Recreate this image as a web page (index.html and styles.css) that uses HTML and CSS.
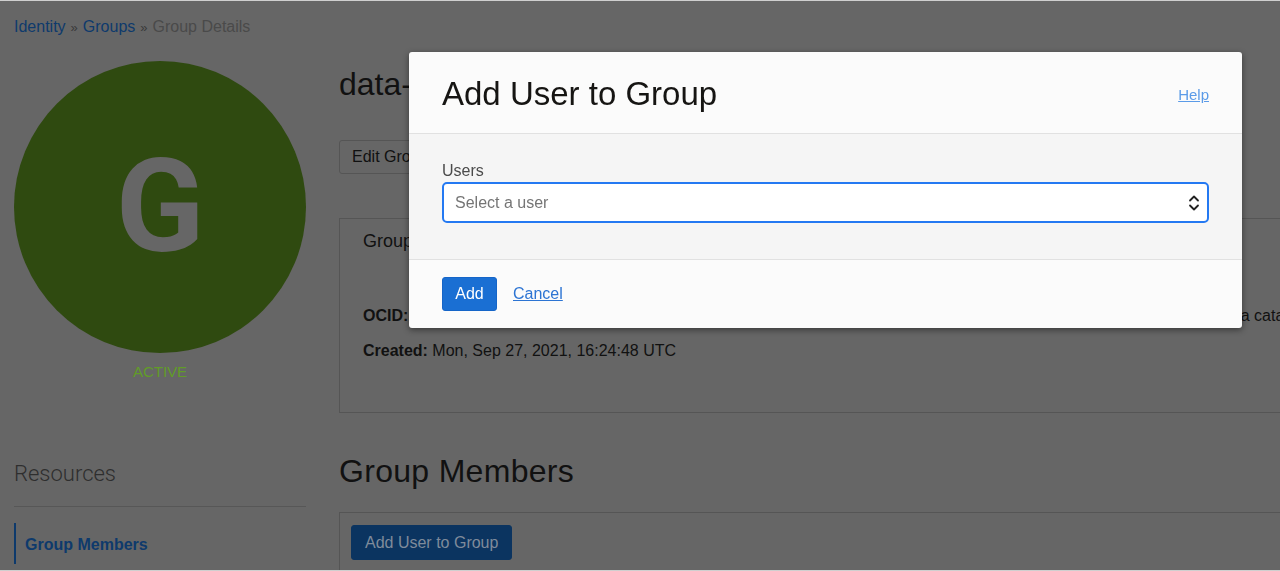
FILE: index.html
```html
<!DOCTYPE html>
<html lang="en">
<head>
<meta charset="utf-8">
<title>Group Details</title>
<link rel="stylesheet" href="styles.css">
</head>
<body>
<div class="page">
  <nav class="breadcrumb">
    <a href="#">Identity</a><span class="sep">»</span><a href="#">Groups</a><span class="sep">»</span><span class="current">Group Details</span>
  </nav>
  <div class="layout">
    <aside class="side">
      <div class="avatar"><span>G</span></div>
      <div class="status">ACTIVE</div>
      <h3 class="res-title">Resources</h3>
      <ul class="res-nav">
        <li class="active"><a href="#">Group Members</a></li>
      </ul>
    </aside>
    <main class="main">
      <h1 class="page-title">data-catalog-users</h1>
      <div class="actions">
        <button class="btn">Edit Group</button>
      </div>
      <section class="info-box">
        <h2 class="info-title">Group Information</h2>
        <div class="info-grid">
          <div class="col">
            <p class="row"><b>OCID:</b> ...xk7a <a href="#">Show</a> <a href="#">Copy</a></p>
            <p class="row"><b>Created:</b> Mon, Sep 27, 2021, 16:24:48 UTC</p>
          </div>
          <div class="col col2">
            <p class="row"><b>Description:</b> Users of the data catalog</p>
          </div>
        </div>
      </section>
      <h1 class="section-title">Group Members</h1>
      <section class="members-box">
        <button class="btn btn-primary-dim">Add User to Group</button>
      </section>
    </main>
  </div>
</div>

<div class="modal" role="dialog">
  <header class="modal-head">
    <h2 class="modal-title">Add User to Group</h2>
    <a href="#" class="help">Help</a>
  </header>
  <div class="modal-body">
    <label class="field-label">Users</label>
    <div class="select">
      <span class="placeholder">Select a user</span>
      <svg class="chev" width="14" height="24" viewBox="0 0 14 24" aria-hidden="true">
        <path d="M3 9.5 L7 5.5 L11 9.5" fill="none" stroke="#222" stroke-width="1.8" stroke-linecap="round" stroke-linejoin="round"/>
        <path d="M3 14.5 L7 18.5 L11 14.5" fill="none" stroke="#222" stroke-width="1.8" stroke-linecap="round" stroke-linejoin="round"/>
      </svg>
    </div>
  </div>
  <footer class="modal-foot">
    <button class="btn-add">Add</button>
    <a href="#" class="cancel">Cancel</a>
  </footer>
</div>
<div class="frame"></div>
</body>
</html>
```

FILE: styles.css
```css
html, body {
  margin: 0;
  padding: 0;
  height: 100%;
  overflow: hidden;
}
body {
  background: #666666;
  font-family: "Liberation Sans", Arial, sans-serif;
  color: #111;
}
.page {
  padding: 17px 0 0 14px;
  width: 1400px;
}
.breadcrumb {
  font-size: 16px;
  line-height: 20px;
  height: 20px;
}
.breadcrumb a {
  color: #0e3a6c;
  text-decoration: none;
}
.breadcrumb .sep {
  color: #3a3a3a;
  font-size: 13px;
  margin: 0 5px;
}
.breadcrumb .current {
  color: #4a4a4a;
}
.layout {
  display: flex;
  align-items: flex-start;
  gap: 33px;
  margin-top: 24px;
}
.side {
  width: 292px;
  flex: none;
}
.avatar {
  width: 292px;
  height: 292px;
  border-radius: 50%;
  background: #2f4a10;
  display: flex;
  align-items: center;
  justify-content: center;
}
.avatar span {
  color: #666666;
  font-family: Roboto, "Liberation Sans", sans-serif;
  font-weight: bold;
  font-size: 130px;
  line-height: 1;
}
.status {
  text-align: center;
  color: #619c28;
  font-size: 15px;
  line-height: 20px;
  margin-top: 9px;
}
.res-title {
  margin: 78px 0 0;
  font-family: Roboto, "Liberation Sans", sans-serif;
  font-weight: 300;
  font-size: 22px;
  line-height: 28px;
  color: #2e2e2e;
  padding-bottom: 18px;
  border-bottom: 1px solid #575757;
}
.res-nav {
  list-style: none;
  margin: 16px 0 0;
  padding: 0;
}
.res-nav li {
  border-left: 2px solid #0e3a6c;
  height: 41px;
  display: flex;
  align-items: center;
  padding-left: 9px;
  padding-top: 2px;
  box-sizing: border-box;
}
.res-nav a {
  color: #0e3a6c;
  font-weight: bold;
  font-size: 16px;
  text-decoration: none;
}
.main {
  flex: 1;
}
.page-title,
.section-title {
  margin: 0;
  font-weight: normal;
  font-size: 32px;
  line-height: 40px;
  color: #111;
}
.page-title {
  margin-top: 3px;
}
.section-title {
  letter-spacing: 0.3px;
}
.actions {
  margin-top: 36px;
}
.btn {
  font-family: inherit;
  font-size: 16px;
  height: 34px;
  padding: 0 12px;
  background: #666;
  color: #111;
  border: 1px solid #555;
  border-radius: 3px;
}
.info-box {
  margin-top: 44px;
  height: 195px;
  box-sizing: border-box;
  border: 1px solid #555;
  padding: 10px 23px;
}
.info-title {
  margin: 0;
  font-weight: normal;
  font-size: 18px;
  line-height: 24px;
  color: #111;
}
.info-grid {
  display: flex;
  margin-top: 53px;
}
.col {
  width: 667px;
}
.col2 {
  flex: 1;
  width: auto;
}
.row {
  margin: 0 0 15px;
  font-size: 16px;
  line-height: 20px;
  color: #111;
  white-space: nowrap;
}
.row a {
  color: #0e3a6c;
}
.section-title {
  margin-top: 38px;
}
.members-box {
  margin-top: 21px;
  border: 1px solid #555;
  border-bottom: none;
  padding: 12px 11px;
  height: 60px;
}
.btn-primary-dim {
  background: #0b3460;
  border: 1px solid #0b3460;
  color: #7f8b9b;
  height: 35px;
  padding: 0 13px;
}

/* Modal */
.modal {
  position: fixed;
  left: 409px;
  top: 52px;
  width: 833px;
  background: #fbfbfb;
  border-radius: 3px;
  box-shadow: 0 2px 6px rgba(0, 0, 0, 0.45);
  overflow: hidden;
}
.modal-head {
  height: 82px;
  box-sizing: border-box;
  padding: 3px 33px 0;
  display: flex;
  align-items: center;
  justify-content: space-between;
  border-bottom: 1px solid #e1e1e1;
}
.modal-title {
  margin: 0;
  font-weight: normal;
  font-size: 33px;
  color: #161513;
}
.help {
  color: #5b9be8;
  font-size: 15px;
}
.modal-body {
  background: #f5f5f5;
  padding: 27px 33px 36px;
  border-bottom: 1px solid #e1e1e1;
}
.field-label {
  display: block;
  font-size: 16px;
  line-height: 20px;
  color: #4b4b4b;
  margin-bottom: 1px;
}
.select {
  height: 41px;
  box-sizing: border-box;
  background: #fff;
  border: 2px solid #2479f2;
  border-radius: 5px;
  display: flex;
  align-items: center;
  justify-content: space-between;
  padding: 0 6px 0 11px;
}
.placeholder {
  font-size: 16px;
  color: #757575;
}
.modal-foot {
  height: 68px;
  display: flex;
  align-items: center;
  gap: 16px;
  padding: 0 33px;
}
.btn-add {
  font-family: inherit;
  font-size: 16px;
  color: #fff;
  background: #1a6fd3;
  border: 1px solid #1565c8;
  border-radius: 3px;
  height: 34px;
  width: 55px;
  padding: 0;
}
.cancel {
  color: #2c74d3;
  font-size: 16px;
}
.frame {
  position: fixed;
  inset: 0;
  border-top: 1px solid #cfcfcf;
  border-bottom: 1px solid #cfcfcf;
  pointer-events: none;
}
```
